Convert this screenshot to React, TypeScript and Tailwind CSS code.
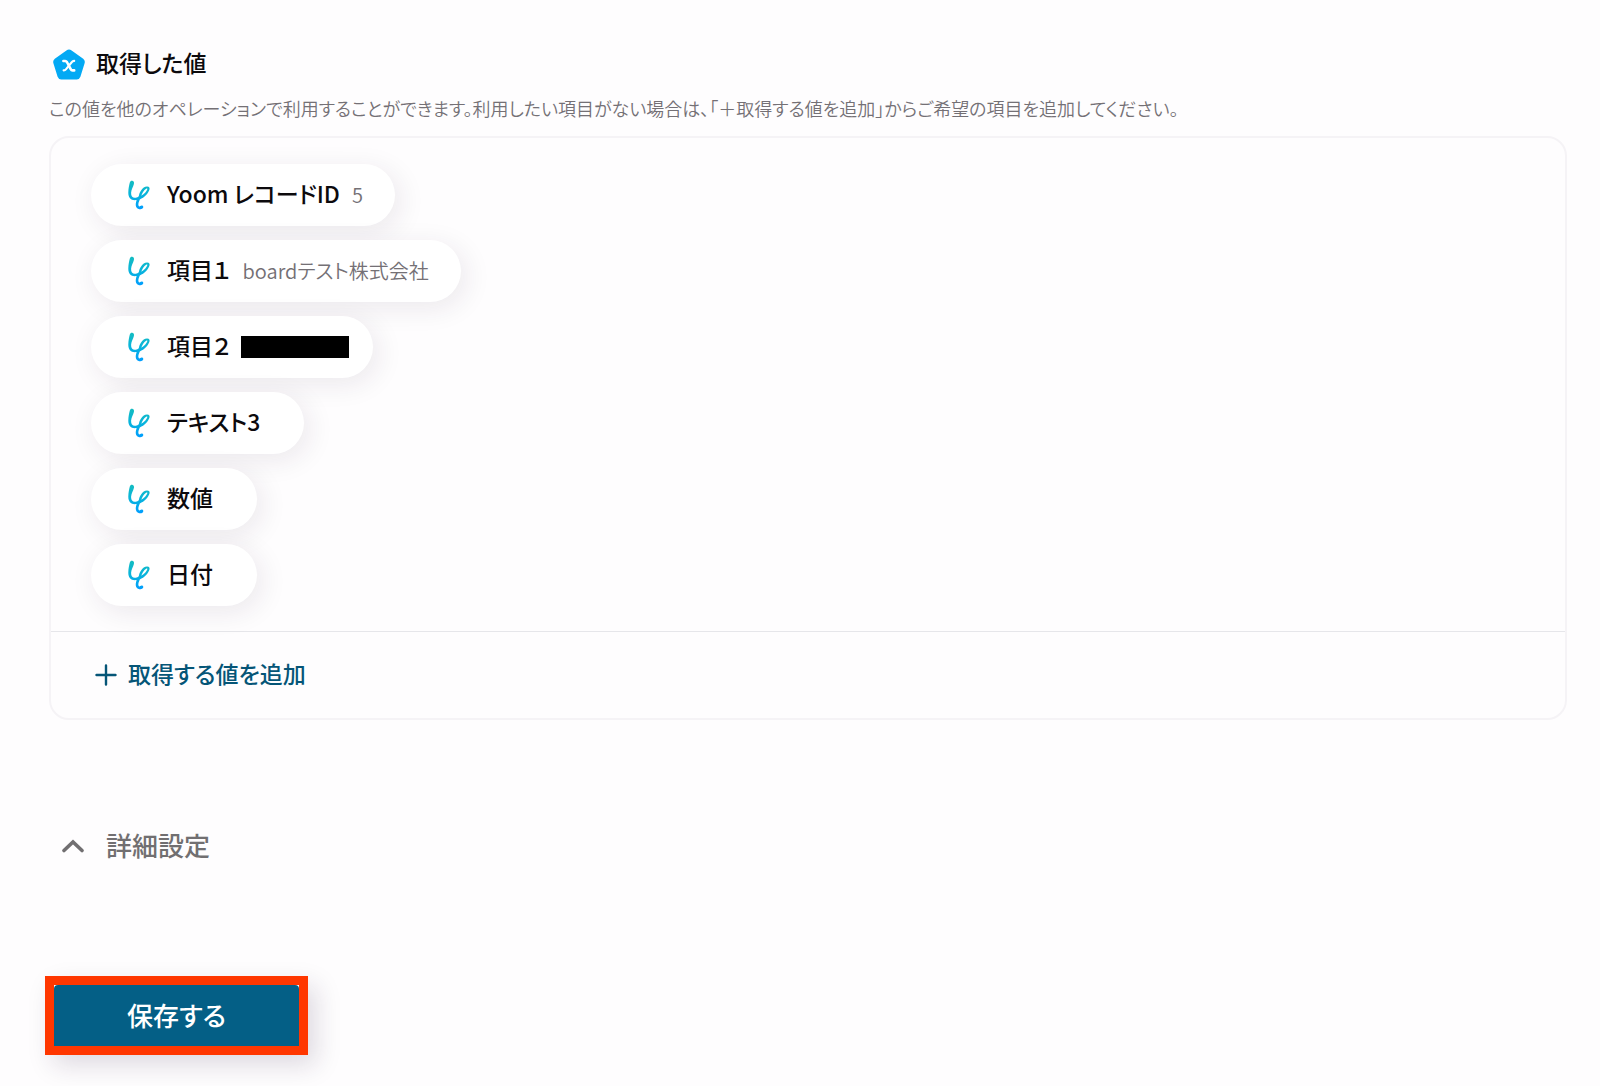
import React from 'react';

interface OutputItem {
    name: string;
    value?: string;
    masked?: boolean;
}

const items: OutputItem[] = [
    { name: 'Yoom レコードID', value: '5' },
    { name: '項目１', value: 'boardテスト株式会社' },
    { name: '項目２', masked: true },
    { name: 'テキスト3' },
    { name: '数値' },
    { name: '日付' },
];

const PentagonIcon: React.FC = () => (
    <svg width="32" height="32" viewBox="0 0 32 32" aria-hidden="true">
        <path
            d="M13.4 2.5Q16 .6 18.6 2.5L30.2 10.8Q32.4 12.5 31.6 15.2L27.4 28.8Q26.5 31.5 23.7 31.5H8.3Q5.5 31.5 4.6 28.8L.4 15.2Q-.4 12.5 1.8 10.8Z"
            fill="#03a9f4"
        />
        <path
            d="M10.4 13H12.2Q13.3 13 13.9 14L17.7 21.2Q18.3 22.4 19.6 22.4H21.2"
            fill="none"
            stroke="#fff"
            strokeWidth="2.6"
            strokeLinecap="round"
            strokeLinejoin="round"
        />
        <path
            d="M21.2 12.9Q19.8 12.8 18.9 14L12.9 21.4Q12 22.5 10.6 22.4"
            fill="none"
            stroke="#fff"
            strokeWidth="2.1"
            strokeLinecap="round"
        />
    </svg>
);

const YoomIcon: React.FC = () => (
    <svg width="24" height="30" viewBox="0 0 24 30" aria-hidden="true">
        <defs>
            <linearGradient id="yoom" x1="0" y1="0" x2="0" y2="1">
                <stop offset="0" stopColor="#14bcc0" />
                <stop offset="0.5" stopColor="#08b4dc" />
                <stop offset="1" stopColor="#009dff" />
            </linearGradient>
        </defs>
        <path
            fill="url(#yoom)"
            d="M5 .7C6.6 .9 7.4 2.2 6.9 4C6.1 6.9 4.3 9.6 4.1 12.8C3.9 16.6 5.9 18.2 8.8 17.7C10 17.5 11 17 11.8 16.3C12.2 12.6 15.2 6.6 20 6.4C22.3 6.3 23 7.9 22.4 9.8C21.3 13.3 17.4 17.7 12.8 19.4C11.8 21.9 11 23.8 11.5 25.5C11.8 26.6 12.7 26.7 13.3 26C14.3 25.1 16 25.4 16.3 26.8C16.5 28.7 14.3 29.7 12.2 29.2C9 28.4 8.3 25.6 9 22.6L9.6 20.1C4.2 21 1.2 17.8 1.3 12.5C1.4 8.7 2.1 4.9 2.9 2.3C3.2 1.2 4 .6 5 .7ZM14.3 15.8C17.3 13.9 19.5 11.4 20.2 9.5C20.6 8.4 20 8.2 19.1 8.8C16.9 10.2 15.2 13 14.3 15.8Z"
        />
    </svg>
);

const OutputChip: React.FC<{ item: OutputItem }> = ({ item }) => (
    <li
        className={`flex h-[62px] items-center rounded-full bg-white pl-9 shadow-[5px_6px_28px_rgba(40,20,60,0.09)] ${
            item.masked ? 'pr-6' : item.value ? 'pr-8' : 'pr-11'
        }`}
    >
        <YoomIcon />
        <span className="ml-4 pb-1 text-[23px] font-medium">{item.name}</span>
        {item.value && (
            <span className="ml-3 text-[20px] font-[350] text-[#747075]">{item.value}</span>
        )}
        {item.masked && <span className="ml-[11px] h-[22px] w-[108px] bg-black" />}
    </li>
);

const App: React.FC = () => {
    return (
        <main
            lang="ja"
            className="min-h-screen bg-[#fefdfe] pt-[46px] pr-[33px] pb-8 pl-[49px] font-['Noto_Sans_CJK_JP',sans-serif] text-[#0c0a0d] [font-feature-settings:'palt']"
        >
            <section>
                <h2 className="flex h-9 items-center gap-[11px] pl-1 text-[23px] font-medium">
                    <PentagonIcon />
                    <span className="pb-1">取得した値</span>
                </h2>
                <p className="mt-[11px] text-[18px] leading-[30px] font-[350] text-[#747075]">
                    この値を他のオペレーションで利用することができます。利用したい項目がない場合は、「＋取得する値を追加」からご希望の項目を追加してください。
                </p>

                <div className="mt-[13px] overflow-hidden rounded-[20px] border-2 border-[#f5f3f6]">
                    <ul className="flex flex-col items-start gap-[14px] px-10 pt-[26px] pb-[25px]">
                        {items.map((item) => (
                            <OutputChip key={item.name} item={item} />
                        ))}
                    </ul>
                    <div className="border-t border-[#e6e6ea] px-11 py-6">
                        <button
                            type="button"
                            className="flex h-[38px] items-center gap-[11px] text-[23px] font-medium text-[#055577]"
                        >
                            <svg width="22" height="22" viewBox="0 0 22 22" aria-hidden="true">
                                <path d="M11 1.5V20.5M1.5 11H20.5" stroke="currentColor" strokeWidth="2.4" strokeLinecap="round" />
                            </svg>
                            <span className="pb-1">取得する値を追加</span>
                        </button>
                    </div>
                </div>
            </section>

            <button
                type="button"
                className="mt-[106px] flex h-10 items-center gap-[22px] pl-[13px] text-[26px] font-medium text-[#716f71]"
            >
                <svg width="22" height="14" viewBox="0 0 22 14" aria-hidden="true">
                    <path
                        d="M2 11.5L11 3L20 11.5"
                        fill="none"
                        stroke="currentColor"
                        strokeWidth="3.6"
                        strokeLinecap="round"
                    />
                </svg>
                <span className="pb-1">詳細設定</span>
            </button>

            {/* save button with its highlight frame */}
            <div className="mt-[110px] -ml-1 w-fit border-[9px] border-[#ff3700] bg-white shadow-[8px_10px_24px_rgba(40,20,60,0.15)]">
                <button
                    type="button"
                    className="block h-[61px] w-[245px] rounded-t-[4px] bg-[#045f86] pb-[2px] text-[26px] font-medium text-white"
                >
                    保存する
                </button>
            </div>
        </main>
    );
};

export default App;
